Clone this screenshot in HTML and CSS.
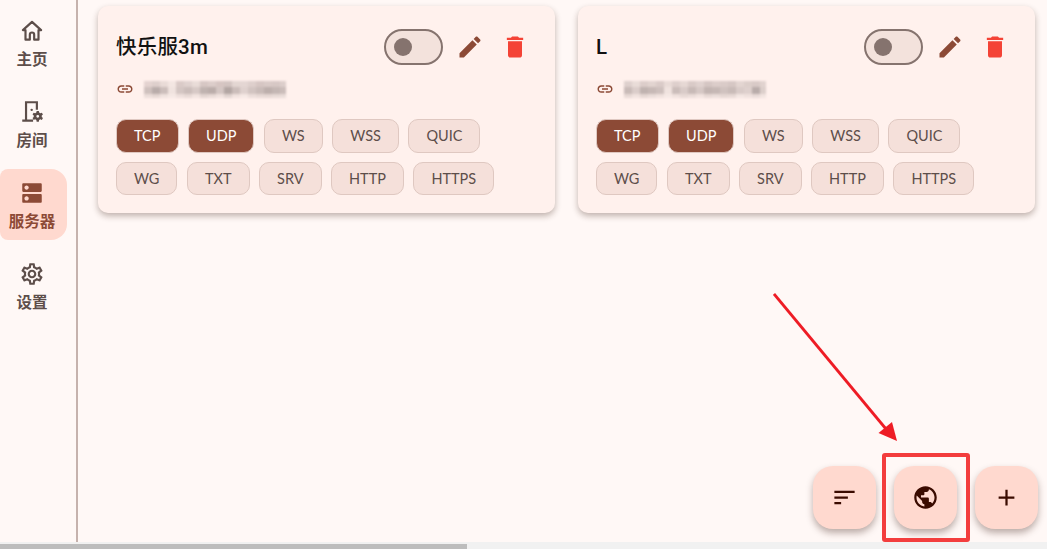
FILE: index.html
```html
<!DOCTYPE html>
<html lang="zh-CN">
<head>
    <meta charset="UTF-8">
    <title>服务器</title>
    <link rel="stylesheet" href="styles.css">
</head>
<body>
    <div class="app">
        <nav class="sidebar">
            <a class="nav-item">
                <svg class="nav-icon" viewBox="0 0 24 24"><path class="home-line" d="M12 3.6L3.6 11.2H6V20h4v-4.6a2 2 0 0 1 4 0V20h4v-8.8h2.4z"/></svg>
                <span>主页</span>
            </a>
            <a class="nav-item">
                <svg class="nav-icon" viewBox="0 0 24 24">
                    <path d="M3 21v-2h2.5V2h12v8h-2V4h-8v15H13v2H3z"/>
                    <circle cx="11.7" cy="10" r="1.1"/>
                    <path transform="translate(-.7 -1.5)" d="M17 12.5h2l.3 1.5 1.1.6 1.4-.5 1 1.7-1.1 1v1.3l1.1 1-1 1.7-1.4-.5-1.1.6-.3 1.5h-2l-.3-1.5-1.1-.6-1.4.5-1-1.7 1.1-1v-1.3l-1.1-1 1-1.7 1.4.5 1.1-.6zm1 3.7a1.3 1.3 0 1 0 0 2.6 1.3 1.3 0 0 0 0-2.6z" fill-rule="evenodd"/>
                </svg>
                <span>房间</span>
            </a>
            <a class="nav-item active">
                <svg class="nav-icon" viewBox="0 0 24 24"><path d="M20 13H4c-.55 0-1 .45-1 1v6c0 .55.45 1 1 1h16c.55 0 1-.45 1-1v-6c0-.55-.45-1-1-1zM7 19c-1.1 0-2-.9-2-2s.9-2 2-2 2 .9 2 2-.9 2-2 2zM20 3H4c-.55 0-1 .45-1 1v6c0 .55.45 1 1 1h16c.55 0 1-.45 1-1V4c0-.55-.45-1-1-1zM7 9c-1.1 0-2-.9-2-2s.9-2 2-2 2 .9 2 2-.9 2-2 2z"/></svg>
                <span>服务器</span>
            </a>
            <a class="nav-item">
                <svg class="nav-icon" viewBox="0 0 24 24"><path d="M19.43 12.98c.04-.32.07-.64.07-.98 0-.34-.03-.66-.07-.98l2.11-1.65c.19-.15.24-.42.12-.64l-2-3.46c-.09-.16-.26-.25-.44-.25-.06 0-.12.01-.17.03l-2.49 1c-.52-.4-1.08-.73-1.69-.98l-.38-2.65C14.46 2.18 14.25 2 14 2h-4c-.25 0-.46.18-.49.42l-.38 2.65c-.61.25-1.17.59-1.69.98l-2.49-1c-.06-.02-.12-.03-.18-.03-.17 0-.34.09-.43.25l-2 3.46c-.13.22-.07.49.12.64l2.11 1.65c-.04.32-.07.65-.07.98 0 .33.03.66.07.98l-2.11 1.65c-.19.15-.24.42-.12.64l2 3.46c.09.16.26.25.44.25.06 0 .12-.01.17-.03l2.49-1c.52.4 1.08.73 1.69.98l.38 2.65c.03.24.24.42.49.42h4c.25 0 .46-.18.49-.42l.38-2.65c.61-.25 1.17-.59 1.69-.98l2.49 1c.06.02.12.03.18.03.17 0 .34-.09.43-.25l2-3.46c.12-.22.07-.49-.12-.64l-2.11-1.65zm-1.98-1.71c.04.31.05.52.05.73 0 .21-.02.43-.05.73l-.14 1.13.89.7 1.08.84-.7 1.21-1.27-.51-1.04-.42-.9.68c-.43.32-.84.56-1.25.73l-1.06.43-.16 1.13-.2 1.35h-1.4l-.19-1.35-.16-1.13-1.06-.43c-.43-.18-.83-.41-1.23-.71l-.91-.7-1.06.43-1.27.51-.7-1.21 1.08-.84.89-.7-.14-1.13c-.03-.31-.05-.54-.05-.74s.02-.43.05-.73l.14-1.13-.89-.7-1.08-.84.7-1.21 1.27.51 1.04.42.9-.68c.43-.32.84-.56 1.25-.73l1.06-.43.16-1.13.2-1.35h1.39l.19 1.35.16 1.13 1.06.43c.43.18.83.41 1.23.71l.91.7 1.06-.43 1.27-.51.7 1.21-1.07.85-.89.7.14 1.13zM12 8c-2.21 0-4 1.79-4 4s1.79 4 4 4 4-1.79 4-4-1.79-4-4-4zm0 6c-1.1 0-2-.9-2-2s.9-2 2-2 2 .9 2 2-.9 2-2 2z"/></svg>
                <span>设置</span>
            </a>
        </nav>

        <main class="content">
            <div class="server-grid">
                <div class="card">
                    <div class="card-head">
                        <h3 class="card-title">快乐服3m</h3>
                        <div class="switch"><div class="knob"></div></div>
                        <svg class="icon-btn edit" viewBox="0 0 24 24"><path d="M3 17.25V21h3.75L17.81 9.94l-3.75-3.75L3 17.25zM20.71 7.04c.39-.39.39-1.02 0-1.41l-2.34-2.34c-.39-.39-1.02-.39-1.41 0l-1.83 1.83 3.75 3.75 1.83-1.83z"/></svg>
                        <svg class="icon-btn delete" viewBox="0 0 24 24"><path d="M6 19c0 1.1.9 2 2 2h8c1.1 0 2-.9 2-2V7H6v12zM19 4h-3.5l-1-1h-5l-1 1H5v2h14V4z"/></svg>
                    </div>
                    <div class="card-url">
                        <svg class="link-icon" viewBox="0 0 24 24"><path d="M3.9 12c0-1.71 1.39-3.1 3.1-3.1h4V7H7c-2.76 0-5 2.24-5 5s2.24 5 5 5h4v-1.9H7c-1.71 0-3.1-1.39-3.1-3.1zM8 13h8v-2H8v2zm9-6h-4v1.9h4c1.71 0 3.1 1.39 3.1 3.1s-1.39 3.1-3.1 3.1h-4V17h4c2.76 0 5-2.24 5-5s-2.24-5-5-5z"/></svg>
                        <div class="mosaic mosaic-a"></div>
                    </div>
                    <div class="chips">
                        <span class="chip on">TCP</span>
                        <span class="chip on">UDP</span>
                        <span class="chip">WS</span>
                        <span class="chip">WSS</span>
                        <span class="chip">QUIC</span>
                    </div>
                    <div class="chips">
                        <span class="chip">WG</span>
                        <span class="chip">TXT</span>
                        <span class="chip">SRV</span>
                        <span class="chip">HTTP</span>
                        <span class="chip">HTTPS</span>
                    </div>
                </div>

                <div class="card">
                    <div class="card-head">
                        <h3 class="card-title">L</h3>
                        <div class="switch"><div class="knob"></div></div>
                        <svg class="icon-btn edit" viewBox="0 0 24 24"><path d="M3 17.25V21h3.75L17.81 9.94l-3.75-3.75L3 17.25zM20.71 7.04c.39-.39.39-1.02 0-1.41l-2.34-2.34c-.39-.39-1.02-.39-1.41 0l-1.83 1.83 3.75 3.75 1.83-1.83z"/></svg>
                        <svg class="icon-btn delete" viewBox="0 0 24 24"><path d="M6 19c0 1.1.9 2 2 2h8c1.1 0 2-.9 2-2V7H6v12zM19 4h-3.5l-1-1h-5l-1 1H5v2h14V4z"/></svg>
                    </div>
                    <div class="card-url">
                        <svg class="link-icon" viewBox="0 0 24 24"><path d="M3.9 12c0-1.71 1.39-3.1 3.1-3.1h4V7H7c-2.76 0-5 2.24-5 5s2.24 5 5 5h4v-1.9H7c-1.71 0-3.1-1.39-3.1-3.1zM8 13h8v-2H8v2zm9-6h-4v1.9h4c1.71 0 3.1 1.39 3.1 3.1s-1.39 3.1-3.1 3.1h-4V17h4c2.76 0 5-2.24 5-5s-2.24-5-5-5z"/></svg>
                        <div class="mosaic mosaic-b"></div>
                    </div>
                    <div class="chips">
                        <span class="chip on">TCP</span>
                        <span class="chip on">UDP</span>
                        <span class="chip">WS</span>
                        <span class="chip">WSS</span>
                        <span class="chip">QUIC</span>
                    </div>
                    <div class="chips">
                        <span class="chip">WG</span>
                        <span class="chip">TXT</span>
                        <span class="chip">SRV</span>
                        <span class="chip">HTTP</span>
                        <span class="chip">HTTPS</span>
                    </div>
                </div>
            </div>

            <div class="fab-row">
                <button class="fab"><svg viewBox="0 0 24 24"><path d="M3 18h6v-2H3v2zM3 6v2h18V6H3zm0 7h12v-2H3v2z"/></svg></button>
                <button class="fab"><svg viewBox="0 0 24 24"><path d="M12 2C6.48 2 2 6.48 2 12s4.48 10 10 10 10-4.48 10-10S17.52 2 12 2zm-1 17.93c-3.95-.49-7-3.85-7-7.93 0-.62.08-1.21.21-1.79L9 15v1c0 1.1.9 2 2 2v1.93zm6.9-2.54c-.26-.81-1-1.39-1.9-1.39h-1v-3c0-.55-.45-1-1-1H8v-2h2c.55 0 1-.45 1-1V7h2c1.1 0 2-.9 2-2v-.41c2.93 1.19 5 4.06 5 7.41 0 2.08-.8 3.97-2.1 5.39z"/></svg></button>
                <button class="fab"><svg viewBox="0 0 24 24"><path d="M19 13h-6v6h-2v-6H5v-2h6V5h2v6h6v2z"/></svg></button>
            </div>
        </main>
    </div>

    <div class="scrollbar"><div class="scroll-thumb"></div></div>

    <!-- red markup drawn over the screenshot -->
    <svg class="arrow" viewBox="0 0 140 160">
        <line x1="1" y1="1" x2="113" y2="136" stroke="#ee1c25" stroke-width="2.8"/>
        <polygon points="124,148 105.5,140 119,129" fill="#ee1c25"/>
    </svg>
    <div class="highlight"></div>
</body>
</html>
```

FILE: styles.css
```css
* {
    box-sizing: border-box;
}
html, body {
    height: 100%;
}
body {
    margin: 0;
    background-color: #fff8f6;
    font-family: Roboto, "Noto Sans CJK SC", sans-serif;
    overflow: hidden;
    display: flex;
    flex-direction: column;
}
.app {
    flex: 1;
    display: flex;
    min-height: 0;
}

/* left navigation */
.sidebar {
    width: 78px;
    flex-shrink: 0;
    padding-top: 7px;
    border-right: 2px solid #c6b2ad;
    display: flex;
    flex-direction: column;
    gap: 10px;
}
.nav-item {
    width: 67px;
    height: 71px;
    padding: 11px 3px 0 0;
    border-radius: 8px 16px 16px 8px;
    display: flex;
    flex-direction: column;
    align-items: center;
    color: #5d4e4a;
    fill: #5d4e4a;
    font-size: 15.5px;
    font-weight: 700;
    line-height: 20px;
}
.nav-item span {
    white-space: nowrap;
    margin-top: 6px;
}
.nav-item.active {
    background-color: #ffd9cf;
    color: #8c4a36;
    fill: #8c4a36;
}
.nav-icon {
    width: 26px;
    height: 26px;
}
.home-line {
    fill: none;
    stroke: #5d4e4a;
    stroke-width: 2;
    stroke-linejoin: round;
}

/* server cards */
.content {
    flex: 1;
    position: relative;
    padding: 6px 12px 0 20px;
    min-width: 0;
}
.server-grid {
    display: grid;
    grid-template-columns: 1fr 1fr;
    gap: 23px;
}
.card {
    height: 207px;
    padding: 23px 18px 0;
    background-color: #fff1ed;
    border-radius: 10px;
    box-shadow: 0 3px 6px rgba(60, 30, 20, 0.32);
}
.card-head {
    display: flex;
    align-items: center;
    height: 36px;
}
.card-title {
    flex: 1;
    margin: 0;
    color: #111;
    font-size: 20.5px;
    font-weight: 500;
    line-height: 36px;
    letter-spacing: 0.2px;
}
.switch {
    width: 59px;
    height: 36px;
    padding-left: 8px;
    display: flex;
    align-items: center;
    background-color: #f3e2dc;
    border: 2px solid #85736e;
    border-radius: 18px;
}
.knob {
    width: 18px;
    height: 18px;
    border-radius: 50%;
    background-color: #85736e;
}
.icon-btn {
    width: 28px;
    height: 28px;
}
.edit {
    margin-left: 13px;
    fill: #8c4a36;
}
.delete {
    margin-left: 17px;
    margin-right: 8px;
    fill: #f44336;
}
.card-url {
    display: flex;
    align-items: center;
    height: 18px;
    margin-top: 15px;
}
.link-icon {
    width: 18px;
    height: 18px;
    fill: #8c4a36;
}

/* blurred-out address, three rows of blocks */
.mosaic {
    width: 142px;
    height: 17px;
    margin-left: 10px;
    filter: blur(1px);
    background-repeat: no-repeat;
    background-size: 100% 6px, 100% 7px, 100% 4px;
    background-position: 0 0, 0 6px, 0 13px;
}
.mosaic-a {
    background-image:
        linear-gradient(90deg, #e4d3d0 0 8px, #decfcc 8px 16px, #e9dbd7 16px 24px, #f3e6e2 24px 32px, #dacac7 32px 40px, #e0d2cf 40px 48px, #e9dcd8 48px 56px, #d7c7c4 56px 64px, #dccdca 64px 72px, #d6c5c2 72px 80px, #d3c4c1 80px 88px, #e3d6d2 88px 96px, #e4d6d3 96px 104px, #decfcc 104px 112px, #d6c6c3 112px 120px, #d9cac7 120px 128px, #d7c8c5 128px 136px, #dccecb 136px 142px),
        linear-gradient(90deg, #cfc1be 0 8px, #b9acaa 8px 16px, #ccbebb 16px 24px, #f0e3df 24px 32px, #d4c6c3 32px 40px, #cbbdba 40px 48px, #d7c9c6 48px 56px, #c0b3b0 56px 64px, #bbadaa 64px 72px, #d4c6c3 72px 80px, #b3a6a3 80px 88px, #cbbdba 88px 96px, #dfd1ce 96px 104px, #d2c4c1 104px 112px, #c9bbb8 112px 120px, #bdafac 120px 128px, #c4b7b4 128px 136px, #cbbdba 136px 142px),
        linear-gradient(90deg, #ecdeda 0 8px, #e6d8d4 8px 16px, #f0e3df 16px 24px, #f6e9e5 24px 32px, #eee0dc 32px 40px, #e8dad6 40px 48px, #f2e4e0 48px 56px, #e4d6d2 56px 64px, #e9dbd7 64px 72px, #f0e2de 72px 80px, #e2d5d1 80px 88px, #f1e3df 88px 96px, #f6e9e5 96px 104px, #ecdeda 104px 112px, #e8dad6 112px 120px, #e6d8d4 120px 128px, #e8dbd7 128px 136px, #eaddd9 136px 142px);
}
.mosaic-b {
    background-image:
        linear-gradient(90deg, #ded0cd 0 8px, #e9dcd8 8px 16px, #dccdca 16px 24px, #e2d4d0 24px 32px, #dacbc8 32px 40px, #e9dbd7 40px 48px, #decfcc 48px 56px, #e6d8d4 56px 64px, #d9cac7 64px 72px, #e0d2cf 72px 80px, #d5c6c3 80px 88px, #dccdca 88px 96px, #dacbc8 96px 104px, #d6c7c4 104px 112px, #e3d5d1 112px 120px, #dcceca 120px 128px, #d9cac7 128px 136px, #e1d3cf 136px 142px),
        linear-gradient(90deg, #c9bbb8 0 8px, #dbcdca 8px 16px, #c0b3b0 16px 24px, #c7b9b6 24px 32px, #cec0bd 32px 40px, #f0e3df 40px 48px, #cbbdba 48px 56px, #d9cbc8 56px 64px, #c8bab7 64px 72px, #d6c8c5 72px 80px, #c3b5b2 80px 88px, #c6b8b5 88px 96px, #d0c2bf 96px 104px, #c9bbb8 104px 112px, #d9cbc8 112px 120px, #ded0cd 120px 128px, #b9acaa 128px 136px, #dccfcb 136px 142px),
        linear-gradient(90deg, #e8dad6 0 8px, #f1e3df 8px 16px, #e6d8d4 16px 24px, #ebdeda 24px 32px, #f0e2de 32px 40px, #f6e9e5 40px 48px, #f0e2de 48px 56px, #e8dad6 56px 64px, #ecdeda 64px 72px, #f2e4e0 72px 80px, #e8dad6 80px 88px, #ebdeda 88px 96px, #e6d8d4 96px 104px, #e8dad6 104px 112px, #f3e6e2 112px 120px, #f0e2de 120px 128px, #eadcd9 128px 136px, #f2e5e1 136px 142px);
}

.chips {
    display: flex;
    gap: 9.5px;
    margin-top: 9px;
}
.card-url + .chips {
    margin-top: 21px;
}
.chip {
    height: 33.5px;
    padding: 0 17px;
    display: flex;
    align-items: center;
    background-color: #f5e0da;
    border: 1.5px solid #dfc8c1;
    border-radius: 10px;
    color: #5d4e4a;
    font-family: Lato, "Noto Sans CJK SC", sans-serif;
    font-size: 14.5px;
}
.chip.on {
    background-color: #8c4a36;
    color: #fff;
}

/* floating buttons */
.fab-row {
    position: absolute;
    right: 9.5px;
    bottom: 13.5px;
    display: flex;
    gap: 18px;
}
.fab {
    width: 63px;
    height: 63px;
    padding: 0;
    border: none;
    border-radius: 20px;
    background-color: #ffd9cf;
    box-shadow: 0 4px 7px rgba(60, 30, 20, 0.35);
    display: flex;
    align-items: center;
    justify-content: center;
}
.fab svg {
    width: 27px;
    height: 27px;
    fill: #3a0b00;
}

/* bottom scrollbar */
.scrollbar {
    height: 7px;
    flex-shrink: 0;
    background-color: #f1f1f1;
    padding-top: 2px;
}
.scroll-thumb {
    width: 467px;
    height: 5px;
    background-color: #bdbdbd;
}

/* annotation */
.arrow {
    position: absolute;
    left: 773px;
    top: 293px;
    width: 140px;
    height: 160px;
}
.highlight {
    position: absolute;
    left: 882px;
    top: 453px;
    width: 88px;
    height: 89px;
    border: 4px solid #f33d3d;
    border-radius: 3px;
}
```
